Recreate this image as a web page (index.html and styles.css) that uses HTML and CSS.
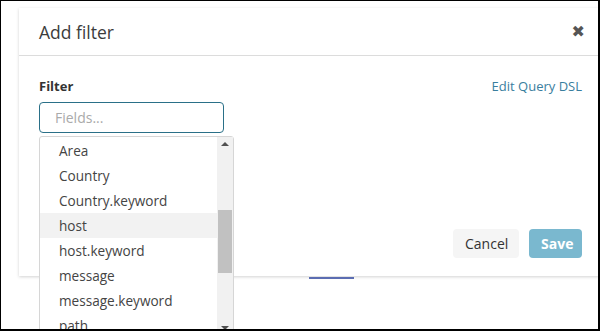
FILE: index.html
```html
<!DOCTYPE html>
<html lang="en">
<head>
    <meta charset="UTF-8">
    <title>Add filter</title>
    <link rel="stylesheet" href="styles.css">
</head>
<body>
    <div class="screen">
        <div class="modal">
            <div class="modal-header">
                <h2>Add filter</h2>
                <span class="close">&#10006;</span>
            </div>
            <div class="modal-body">
                <div class="label-row">
                    <label for="fields">Filter</label>
                    <a class="dsl-link">Edit Query DSL</a>
                </div>
                <input type="text" id="fields" placeholder="Fields...">

                <div class="dropdown">
                    <ul class="options">
                        <li>Area</li>
                        <li>Country</li>
                        <li>Country.keyword</li>
                        <li class="active">host</li>
                        <li>host.keyword</li>
                        <li>message</li>
                        <li>message.keyword</li>
                        <li>path</li>
                    </ul>
                    <div class="scrollbar">
                        <span class="arrow up"></span>
                        <div class="track"><div class="thumb"></div></div>
                        <span class="arrow down"></span>
                    </div>
                </div>

                <div class="footer">
                    <button class="btn btn-cancel">Cancel</button>
                    <button class="btn btn-save" disabled>Save</button>
                </div>
            </div>
        </div>
        <div class="behind">
            <span class="tab"></span>
        </div>
    </div>
</body>
</html>
```

FILE: styles.css
```css
* {
    margin: 0;
    padding: 0;
    box-sizing: border-box;
}

body {
    font-family: 'Open Sans', 'Liberation Sans', sans-serif;
    background: #ffffff;
    color: #444;
}

.screen {
    width: 600px;
    height: 331px;
    border: 1px solid #000;
    border-right-width: 2px;
    border-bottom-width: 2px;
    background: #ffffff;
    overflow: hidden;
    display: flex;
    flex-direction: column;
}

.modal {
    margin: 7px 0 0 18px;
    width: 580px;
    height: 268px;
    background: #ffffff;
    box-shadow: 0 1px 3px rgba(0, 0, 0, 0.18);
    display: flex;
    flex-direction: column;
}

.modal-header {
    height: 48px;
    border-bottom: 1px solid #dcdcdc;
    display: flex;
    align-items: center;
    justify-content: space-between;
    padding: 0 14px 0 20px;
}

.modal-header h2 {
    font-size: 17.5px;
    font-weight: 400;
    color: #3c3c3c;
}

.close {
    font-size: 16px;
    color: #555;
    font-weight: 700;
    font-family: 'DejaVu Sans', sans-serif;
}

.modal-body {
    position: relative;
    flex: 1;
    display: flex;
    flex-direction: column;
    padding: 21px 17px 18px 20px;
}

.label-row {
    display: flex;
    justify-content: space-between;
    align-items: center;
    height: 18px;
    margin-bottom: 7px;
}

.label-row label {
    font-size: 13px;
    font-weight: 700;
    color: #333;
}

.dsl-link {
    font-size: 13px;
    color: #3a7e9e;
}

input[type="text"] {
    width: 185px;
    height: 31px;
    padding: 0 15px;
    border: 1px solid #2a7088;
    border-radius: 4px;
    font-family: inherit;
    font-size: 14px;
    color: #444;
}

input[type="text"]::placeholder {
    color: #aaa;
}

.dropdown {
    position: absolute;
    top: 80px;
    left: 20px;
    width: 195px;
    height: 200px;
    border: 1px solid #d6d6d6;
    border-radius: 3px;
    background: #ffffff;
    display: flex;
    z-index: 2;
}

.options {
    list-style: none;
    flex: 1;
    padding-top: 1px;
}

.options li {
    height: 25px;
    line-height: 25px;
    padding-left: 19px;
    font-size: 13.6px;
    color: #444;
}

.options li.active {
    background: #f2f2f2;
}

.scrollbar {
    width: 16px;
    background: #f1f1f1;
    display: flex;
    flex-direction: column;
    align-items: center;
}

.arrow {
    width: 0;
    height: 0;
    border-left: 4px solid transparent;
    border-right: 4px solid transparent;
    margin: 5px 0;
}

.arrow.up {
    border-bottom: 4px solid #505050;
}

.arrow.down {
    border-top: 4px solid #505050;
}

.track {
    flex: 1;
    width: 100%;
    padding: 59px 1px 0;
}

.thumb {
    height: 63px;
    background: #c1c1c1;
}

.footer {
    margin-top: auto;
    display: flex;
    justify-content: flex-end;
    gap: 10px;
}

.btn {
    height: 29px;
    border: none;
    border-radius: 4px;
    font-family: inherit;
    font-size: 14px;
    padding: 0 12px;
}

.btn-cancel {
    background: #f5f5f5;
    color: #333;
    width: 66px;
}

.btn-save {
    background: #7ab8cf;
    color: #ffffff;
    font-weight: 700;
    width: 53px;
}

.behind {
    flex: 1;
    padding-left: 308px;
}

.tab {
    display: block;
    width: 45px;
    height: 2px;
    margin-top: 1px;
    background: #5b6db2;
}
```
